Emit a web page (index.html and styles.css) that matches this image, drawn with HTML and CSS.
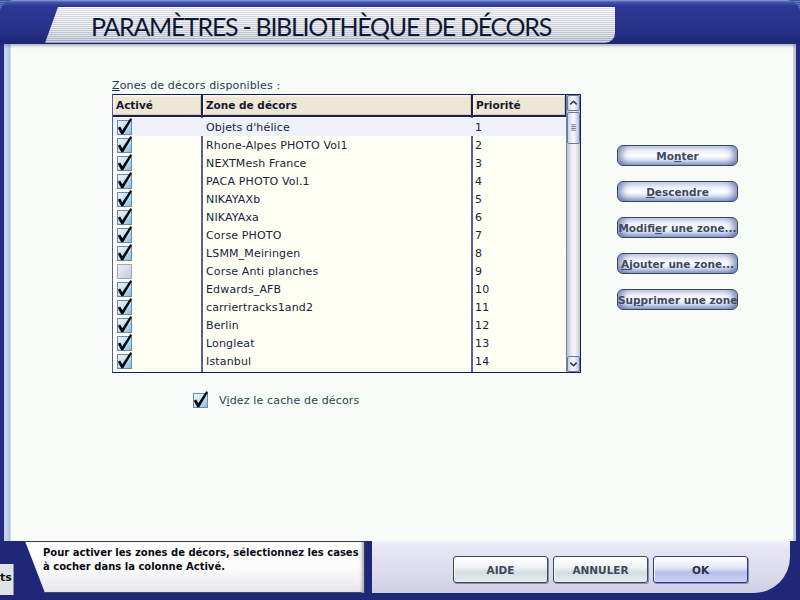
FILE: index.html
```html
<!DOCTYPE html>
<html lang="fr">
<head>
<meta charset="utf-8">
<title>Paramètres - Bibliothèque de décors</title>
<link rel="stylesheet" href="styles.css">
</head>
<body>
<svg class="defs" width="0" height="0" aria-hidden="true">
  <defs>
    <linearGradient id="cbOn" x1="0" y1="0" x2="1" y2="1">
      <stop offset="0" stop-color="#eef8fd"/>
      <stop offset="0.5" stop-color="#c4e0f0"/>
      <stop offset="1" stop-color="#86bcdb"/>
    </linearGradient>
    <linearGradient id="cbOff" x1="0" y1="0" x2="1" y2="1">
      <stop offset="0" stop-color="#eef0f7"/>
      <stop offset="1" stop-color="#c3cadc"/>
    </linearGradient>
    <symbol id="chkOn" viewBox="0 0 15 15" overflow="visible">
      <rect x="0.5" y="0.5" width="14" height="14" fill="url(#cbOn)" stroke="#6a8ab0"/>
      <path d="M0.8 7.8 L3.2 6.4 L5.3 10.2 L13.2 -1.8 L15.2 -0.9 L6.2 14.2 L4.2 14.2 Z" fill="#04060a"/>
    </symbol>
    <symbol id="chkOff" viewBox="0 0 15 15">
      <rect x="0.5" y="0.5" width="14" height="14" fill="url(#cbOff)" stroke="#9aa6c2"/>
    </symbol>
  </defs>
</svg>

<div class="window">
  <header class="titlebar">
    <div class="tab"><h1>PARAMÈTRES - BIBLIOTHÈQUE DE DÉCORS</h1></div>
  </header>

  <main class="content">
    <section class="listblock">
      <div class="caption"><span class="u">Z</span>ones de décors disponibles :</div>
      <div class="grid">
        <div class="list">
          <div class="head">
            <div>Activé</div>
            <div>Zone de décors</div>
            <div>Priorité</div>
          </div>
          <div class="body">
            <div class="row sel"><svg class="cb"><use href="#chkOn"/></svg><span class="name">Objets d'hélice</span><span class="prio">1</span></div>
            <div class="row"><svg class="cb"><use href="#chkOn"/></svg><span class="name">Rhone-Alpes PHOTO Vol1</span><span class="prio">2</span></div>
            <div class="row"><svg class="cb"><use href="#chkOn"/></svg><span class="name">NEXTMesh France</span><span class="prio">3</span></div>
            <div class="row"><svg class="cb"><use href="#chkOn"/></svg><span class="name">PACA PHOTO Vol.1</span><span class="prio">4</span></div>
            <div class="row"><svg class="cb"><use href="#chkOn"/></svg><span class="name">NIKAYAXb</span><span class="prio">5</span></div>
            <div class="row"><svg class="cb"><use href="#chkOn"/></svg><span class="name">NIKAYAxa</span><span class="prio">6</span></div>
            <div class="row"><svg class="cb"><use href="#chkOn"/></svg><span class="name">Corse PHOTO</span><span class="prio">7</span></div>
            <div class="row"><svg class="cb"><use href="#chkOn"/></svg><span class="name">LSMM_Meiringen</span><span class="prio">8</span></div>
            <div class="row"><svg class="cb"><use href="#chkOff"/></svg><span class="name">Corse Anti planches</span><span class="prio">9</span></div>
            <div class="row"><svg class="cb"><use href="#chkOn"/></svg><span class="name">Edwards_AFB</span><span class="prio">10</span></div>
            <div class="row"><svg class="cb"><use href="#chkOn"/></svg><span class="name">carriertracks1and2</span><span class="prio">11</span></div>
            <div class="row"><svg class="cb"><use href="#chkOn"/></svg><span class="name">Berlin</span><span class="prio">12</span></div>
            <div class="row"><svg class="cb"><use href="#chkOn"/></svg><span class="name">Longleat</span><span class="prio">13</span></div>
            <div class="row"><svg class="cb"><use href="#chkOn"/></svg><span class="name">Istanbul</span><span class="prio">14</span></div>
          </div>
        </div>
        <div class="sb">
          <div class="sbtn"><svg viewBox="0 0 12 14"><path d="M2.5 8.5 L6 5 L9.5 8.5" fill="none" stroke="#2c3652" stroke-width="1.6"/></svg></div>
          <div class="thumb"><svg viewBox="0 0 12 30"><path d="M3.5 11.5 H8.5 M3.5 13.5 H8.5 M3.5 15.5 H8.5 M3.5 17.5 H8.5" stroke="#66708c" stroke-width="1"/></svg></div>
          <div class="track"></div>
          <div class="sbtn"><svg viewBox="0 0 12 14"><path d="M2.5 5.5 L6 9 L9.5 5.5" fill="none" stroke="#2c3652" stroke-width="1.6"/></svg></div>
        </div>
      </div>
      <div class="cache">
        <svg class="cb"><use href="#chkOn"/></svg>
        <span>V<span class="u">i</span>dez le cache de décors</span>
      </div>
    </section>

    <aside class="side">
      <button class="pill">Mo<span class="u">n</span>ter</button>
      <button class="pill"><span class="u">D</span>escendre</button>
      <button class="pill">Modifi<span class="u">e</span>r une zone...</button>
      <button class="pill"><span class="u">A</span>jouter une zone...</button>
      <button class="pill">Su<span class="u">p</span>primer une zone</button>
    </aside>
  </main>

  <footer class="bottombar">
    <div class="edge"><div class="ts">ts</div></div>
    <div class="tip">
      <p>Pour activer les zones de décors, sélectionnez les cases<br>à cocher dans la colonne Activé.</p>
    </div>
    <div class="actions">
      <button class="btn">AIDE</button>
      <button class="btn">ANNULER</button>
      <button class="btn ok">OK</button>
    </div>
  </footer>
</div>
</body>
</html>
```

FILE: styles.css
```css
* { box-sizing: border-box; }
html, body { margin: 0; padding: 0; }
body {
  width: 800px;
  height: 600px;
  overflow: hidden;
  background: repeating-linear-gradient(to bottom, #3b5ba2 0 1px, #5b7bbb 1px 2px);
  font-family: "DejaVu Sans", Verdana, sans-serif;
}
.defs { position: absolute; width: 0; height: 0; overflow: hidden; }
.u { text-decoration: underline; }

.window {
  width: 800px;
  height: 600px;
  display: flex;
  flex-direction: column;
  background: #222c84;
  border-radius: 14px 14px 0 0;
}

/* ---------- title ---------- */
.titlebar {
  flex: none;
  height: 44px;
  border-radius: 14px 14px 0 0;
  background: linear-gradient(to bottom, #8ea6de 0, #4856ac 2px, #2c3894 6px, #28338c 60%, #1d2574 100%);
  padding: 7px 0 1px 45px;
  display: flex;
}
.tab {
  width: 570px;
  height: 36px;
  clip-path: polygon(13px 0, 100% 0, 100% 100%, 0 100%);
  border-radius: 8px 0 10px 0;
  background:
    repeating-linear-gradient(to bottom, rgba(255,255,255,0.45) 0 1px, rgba(60,60,90,0.10) 1px 2px),
    linear-gradient(to bottom, #f2f3f6 0, #dcdde3 60%, #c4c8d6 85%, #9ca4c6 100%);
  padding-left: 46px;
  display: flex;
  align-items: center;
}
.tab h1 {
  margin: 0;
  font: 400 25px Lato, "Open Sans", sans-serif;
  color: #0c1834;
  letter-spacing: -1.3px;
  white-space: nowrap;
  padding-top: 2px;
}

/* ---------- content ---------- */
.content {
  flex: 1;
  margin: 0 4px;
  background:
    linear-gradient(to left, #cdd2dc 0 3px, transparent 3px),
    linear-gradient(to right, #dce8f5 0, #a9c0dc 6px, #f7fcf6 7px);
  box-shadow: inset 0 2px 3px rgba(50,50,80,0.35);
  padding: 35px 0 0 108px;
  display: flex;
  align-items: flex-start;
}

.listblock { width: 469px; display: flex; flex-direction: column; }
.caption {
  height: 15px;
  font-size: 11px;
  line-height: 14px;
  color: #1e3a58;
  letter-spacing: 0.15px;
}

.grid {
  height: 279px;
  display: flex;
  border: 1px solid #161c56;
  border-left-color: #5a5aa2;
  background: #fffff4;
}
.list { flex: 1; display: flex; flex-direction: column; }
.head {
  display: grid;
  grid-template-columns: 90px 270px 1fr;
  height: 22px;
  border-bottom: 2px solid #1a2058;
  flex: none;
}
.head div {
  background: #efe6d4;
  box-shadow: inset 1px 1px 0 #fbf7ee, inset -1px -1px 0 #d8c9b0, inset 2px 2px 0 #f6efe2;
  font: bold 10.5px "DejaVu Sans", Verdana, sans-serif;
  color: #101830;
  padding: 0 3px;
  line-height: 20px;
  border-right: 2px solid #1a2058;
}
.head div:last-child { border-right: 1px solid #1a2058; }

.body {
  flex: 1;
  padding-top: 1px;
  background:
    linear-gradient(to right, transparent 88px, #5c5ca2 88px 90px, transparent 90px 358px, #5c5ca2 358px 360px, transparent 360px);
}
.row {
  display: grid;
  grid-template-columns: 90px 270px 1fr;
  height: 18px;
  align-items: center;
  font-size: 11px;
  color: #14243c;
  letter-spacing: 0.15px;
  white-space: nowrap;
}
.row.sel { background: #eef0fa; }
.cb { width: 15px; height: 15px; overflow: visible; display: block; }
.row .cb { margin-left: 4px; }
.name { padding-left: 3px; }
.prio { padding-left: 2px; }

/* scrollbar */
.sb {
  width: 14px;
  flex: none;
  display: flex;
  flex-direction: column;
  border-left: 1px solid #7a80a2;
  background: linear-gradient(to right, #b9bdcb, #eceef3 35%, #f6f6f9 60%, #c3c7d3);
}
.sbtn, .thumb {
  flex: none;
  border: 1px solid #6a7aa2;
  border-radius: 2px;
  background: linear-gradient(to right, #c9d3e6, #f6f8fc 45%, #e6ebf4 65%, #b6c1d8);
}
.sbtn { height: 16px; }
.thumb { height: 32px; margin-top: 1px; }
.sbtn svg, .thumb svg { display: block; width: 100%; height: 100%; }
.track { flex: 1; }

.cache {
  margin-top: 20px;
  margin-left: 81px;
  display: flex;
  align-items: center;
  gap: 11px;
  font-size: 11px;
  color: #2a4452;
  letter-spacing: 0.15px;
}

/* side buttons */
.side {
  margin-left: 36px;
  padding-top: 66px;
  display: flex;
  flex-direction: column;
  gap: 15px;
}
.pill {
  width: 121px;
  height: 21px;
  padding: 0;
  border: 1px solid #3a4668;
  border-radius: 6px;
  background: linear-gradient(to bottom, #c6cfe7 0%, #eef2fa 30%, #ffffff 50%, #e0e6f4 70%, #8c9ccb 100%);
  box-shadow: inset 9px 0 7px -5px rgba(70,90,150,0.65), inset -9px 0 7px -5px rgba(70,90,150,0.65);
  font: bold 10.5px "DejaVu Sans", Verdana, sans-serif;
  color: #3c4864;
  white-space: nowrap;
  overflow: hidden;
  text-align: center;
}

/* ---------- bottom ---------- */
.bottombar {
  flex: none;
  height: 59px;
  display: flex;
  align-items: flex-start;
  background: #1f2778;
}
.edge { width: 25px; flex: none; height: 100%; }
.ts {
  margin-top: 23px;
  width: 14px;
  height: 31px;
  background: #dfe2e8;
  border-right: 1px solid #8a8ea0;
  font: bold 11px "DejaVu Sans", sans-serif;
  color: #101010;
  line-height: 16px;
  padding-top: 6px;
  white-space: nowrap;
}
.tip {
  width: 340px;
  height: 52px;
  flex: none;
  clip-path: polygon(0 0, 100% 0, 100% 100%, 20px 100%);
  background: linear-gradient(to bottom, #ffffff 0, #fbfbfc 55%, #e4e4ea 100%);
  box-shadow: inset 0 1px 0 #3a3a52, inset -1px 0 0 #3a3a52, inset -4px 0 3px -1px #a8a8b4, inset 0 -1px 0 #3a3a52;
  padding: 5px 0 0 18px;
}
.tip p {
  margin: 0;
  font: bold 10px "DejaVu Sans", Verdana, sans-serif;
  line-height: 14px;
  color: #0a0a10;
  white-space: nowrap;
}
.actions {
  margin-left: 7px;
  width: 418px;
  height: 52px;
  border-bottom-right-radius: 36px;
  background: linear-gradient(to bottom, #f0f1f8 0, #e6e6f3 15%, #d9d9ec 70%, #cdcde4 100%);
  display: flex;
  justify-content: flex-end;
  gap: 5px;
  padding: 15px 42px 0 0;
}
.btn {
  width: 95px;
  height: 27px;
  padding: 0;
  border: 1px solid #3c4a58;
  border-radius: 3px;
  background: linear-gradient(to bottom, #ffffff 0, #f0f4f5 40%, #d2dde2 62%, #e6eef1 100%);
  box-shadow: inset 1px 1px 0 #ffffff, 1px 1px 0 #8a90a0;
  font: bold 10.5px "DejaVu Sans", Verdana, sans-serif;
  color: #3c4858;
}
.btn.ok {
  border-color: #34349a;
  background: linear-gradient(to bottom, #ffffff 0, #e9ecf8 40%, #b6bfe8 62%, #ccd3f1 100%);
  color: #26304e;
}
```
